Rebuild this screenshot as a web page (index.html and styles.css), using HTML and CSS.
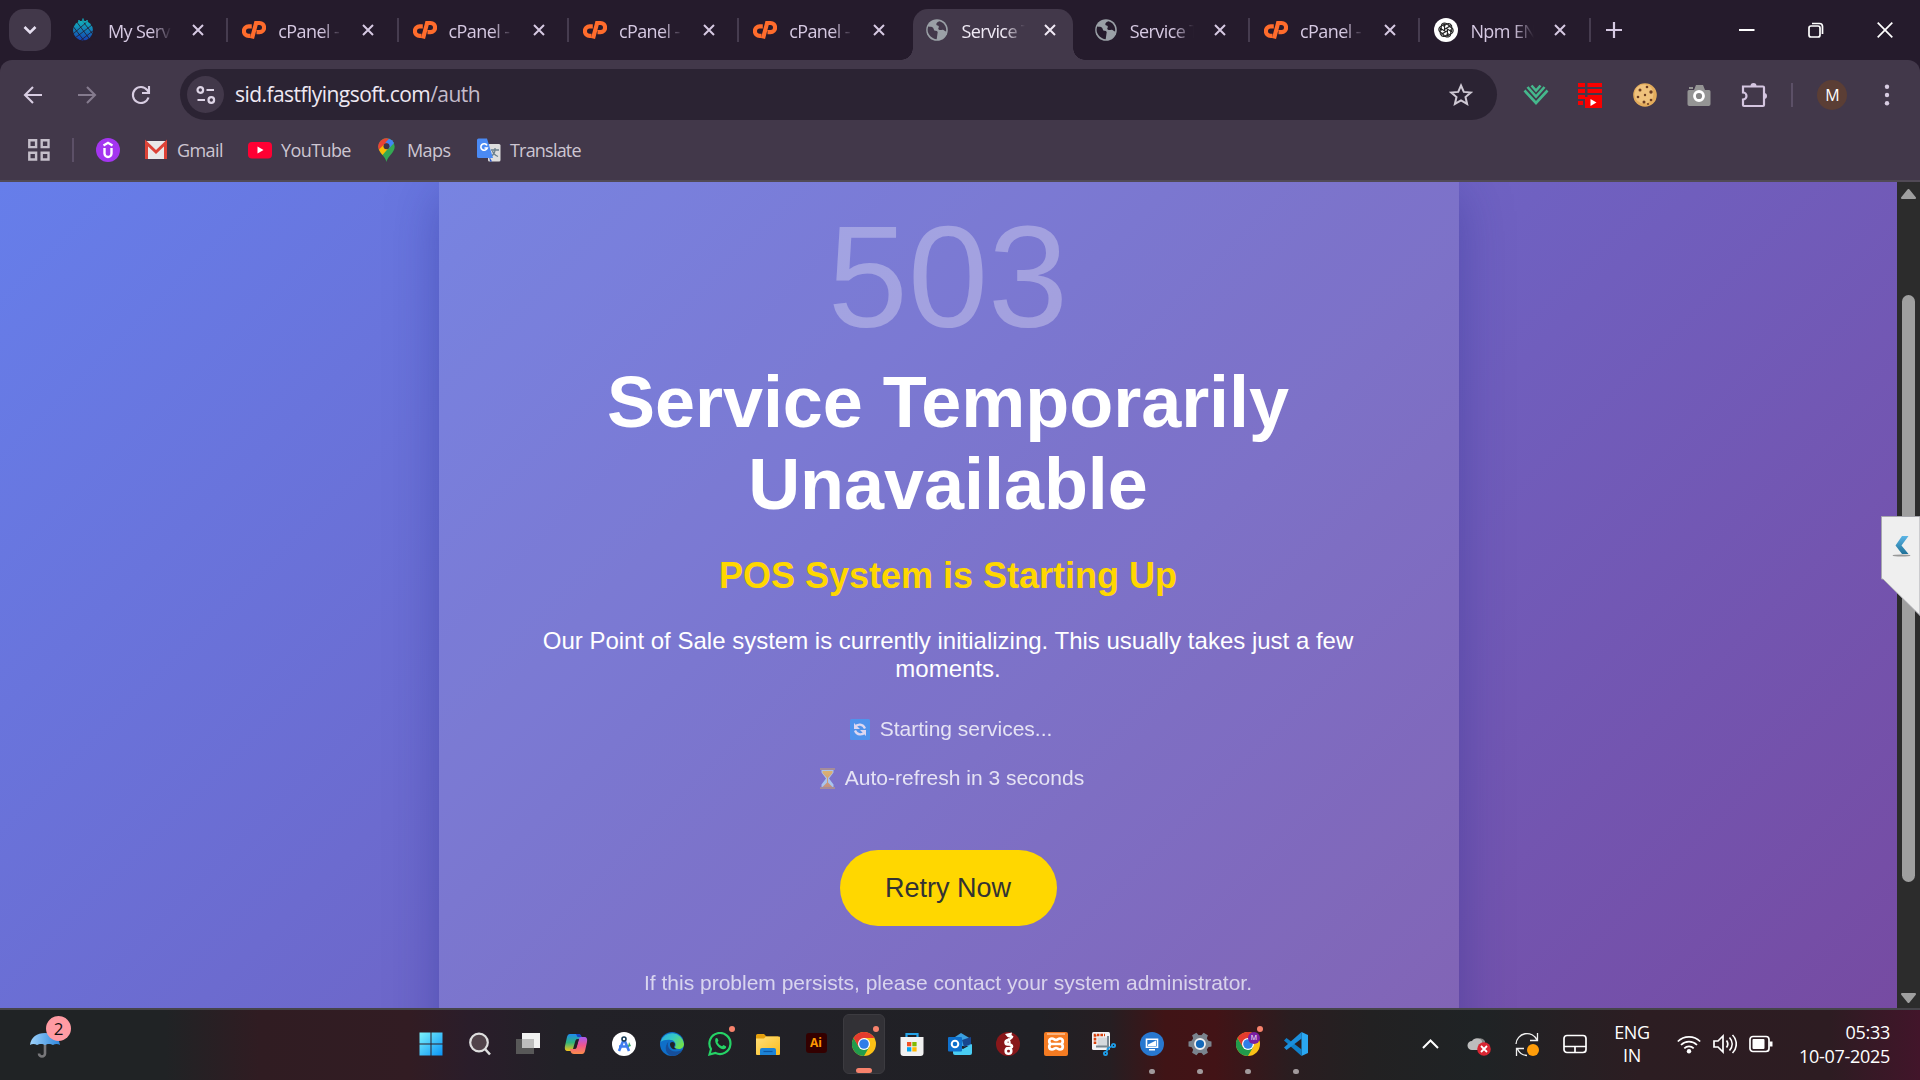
FILE: index.html
```html
<!DOCTYPE html>
<html lang="en">
<head>
<meta charset="utf-8">
<title>Service Temporarily Unavailable</title>
<link rel="stylesheet" href="styles.css">
</head>
<body>
<svg class="defs" aria-hidden="true">
  <defs>
    <linearGradient id="g-win" x1="0" y1="0" x2="1" y2="1"><stop offset="0" stop-color="#7df3fb"/><stop offset="1" stop-color="#0a93f5"/></linearGradient>
    <linearGradient id="g-edge" x1="0" y1="0" x2="1" y2=".6"><stop offset="0" stop-color="#2aa7e8"/><stop offset=".5" stop-color="#34c8c6"/><stop offset="1" stop-color="#6fe04f"/></linearGradient>
    <linearGradient id="g-folder" x1="0" y1="0" x2="1" y2="1"><stop offset="0" stop-color="#ffe07a"/><stop offset="1" stop-color="#fbbc1c"/></linearGradient>
    <linearGradient id="g-cop1" x1="0" y1="0" x2="0" y2="1"><stop offset="0" stop-color="#1e8cf0"/><stop offset=".5" stop-color="#2fb57c"/><stop offset="1" stop-color="#f3c41c"/></linearGradient>
    <linearGradient id="g-cop2" x1="0" y1="0" x2="0" y2="1"><stop offset="0" stop-color="#a65bf0"/><stop offset=".5" stop-color="#f0568e"/><stop offset="1" stop-color="#fb8d4a"/></linearGradient>
    <linearGradient id="g-orb" x1="0" y1="0" x2="0" y2="1"><stop offset="0" stop-color="#12b5bb"/><stop offset="1" stop-color="#1440b4"/></linearGradient>
    <linearGradient id="g-umb" x1="0" y1="0" x2="1" y2="0"><stop offset="0" stop-color="#9fd3fb"/><stop offset="1" stop-color="#2c86dc"/></linearGradient>
    <linearGradient id="g-chev" x1="0" y1="0" x2="0" y2="1"><stop offset="0" stop-color="#5bb5e6"/><stop offset="1" stop-color="#1f7198"/></linearGradient>
    <linearGradient id="g-sand" x1="0" y1="0" x2="0" y2="1"><stop offset="0" stop-color="#f3c25c"/><stop offset="1" stop-color="#d79a6c"/></linearGradient>
    <symbol id="cpanel" viewBox="0 0 24 24"><g fill="none" stroke="#ff6c2c" stroke-width="4.2"><path d="M9.800 8.300H6.700a4.600 4.600 0 0 0 0 9.600H8.500"/><path d="M10 20.500 14.100 5h3.400a4.400 4.400 0 0 1 0 9.200H14.500"/></g></symbol>
    <symbol id="globe" viewBox="0 0 24 24"><circle cx="12" cy="12" r="10.800" fill="#9aa0a6"/><path class="globe-gap" d="M3.200 8.500C5.400 9 6.800 8.200 8 9.700s.5 2.800 2.700 3.100c2 .3 2.300 1.200 1.800 2.700l-.8 5.700C7 20.900 2.600 16.500 2.600 12c0-1.200.2-2.400.6-3.500zM14.600 3.200c-2 .8-3.500 1.600-3.300 3.200.2 1.300 2.300.8 2.500 2 .3 1.400-1.500 2 .2 3.300 1.600 1.100 2.800-.5 4.500.3 1.300.6 1.500 1.500 2.600 1.500.8-4.600-2-9-6.500-10.300z"/></symbol>
    <symbol id="close" viewBox="0 0 12 12"><path d="M1 1l10 10M11 1 1 11" stroke="currentColor" stroke-width="2" fill="none"/></symbol>
    <symbol id="chrome" viewBox="0 0 24 24"><circle cx="12" cy="12" r="12" fill="#fbc116"/><path d="M1.600 6A12 12 0 0 0 12 24l5.200-9L12 12 7 15z" fill="#219b4c"/><path d="M1.600 6A12 12 0 0 1 22.400 6H12l-5.200 9z" fill="#e33b2e"/><circle cx="12" cy="12" r="6" fill="#fff"/><circle cx="12" cy="12" r="4.800" fill="#2f7de8"/></symbol>
  </defs>
</svg>

<div class="tabstrip">
  <div class="tab-search"><svg width="14" height="10" viewBox="0 0 14 10"><path d="M1.500 2 7 7.500 12.500 2" fill="none" stroke="#e6dff0" stroke-width="2.600"/></svg></div>
  <div class="tabs">
    <div class="tab"><svg class="fav" viewBox="0 0 24 24"><circle cx="11" cy="12.500" r="10" fill="url(#g-orb)"/><g stroke="#251b2c" stroke-width=".8" fill="none"><path d="M4 3l15 20M0 7l13 17M9 1l14 18M1 16 16 3M3 20 20 7M8 23l14-11"/></g><path d="M11 .5v5M15 2v3M7 2v3" stroke="#12a5b8" stroke-width="1.500"/></svg><span class="label">My Serv</span><svg class="x"><use href="#close"/></svg></div>
    <div class="tab"><svg class="fav"><use href="#cpanel"/></svg><span class="label">cPanel -</span><svg class="x"><use href="#close"/></svg></div>
    <div class="tab"><svg class="fav"><use href="#cpanel"/></svg><span class="label">cPanel -</span><svg class="x"><use href="#close"/></svg></div>
    <div class="tab"><svg class="fav"><use href="#cpanel"/></svg><span class="label">cPanel -</span><svg class="x"><use href="#close"/></svg></div>
    <div class="tab nosep"><svg class="fav"><use href="#cpanel"/></svg><span class="label">cPanel -</span><svg class="x"><use href="#close"/></svg></div>
    <div class="tab active nosep"><svg class="fav"><use href="#globe"/></svg><span class="label">Service T</span><svg class="x"><use href="#close"/></svg></div>
    <div class="tab"><svg class="fav"><use href="#globe"/></svg><span class="label">Service T</span><svg class="x"><use href="#close"/></svg></div>
    <div class="tab"><svg class="fav"><use href="#cpanel"/></svg><span class="label">cPanel -</span><svg class="x"><use href="#close"/></svg></div>
    <div class="tab"><svg class="fav" viewBox="0 0 24 24"><circle cx="12" cy="12" r="12" fill="#fff"/><g fill="none" stroke="#222" stroke-width="1.100"><path id="petal" d="M9 8.200l3.800-2.200c2.600-1.400 5.400.8 5 3.600v4.200L12 10.300"/><use href="#petal" transform="rotate(60 12 12)"/><use href="#petal" transform="rotate(120 12 12)"/><use href="#petal" transform="rotate(180 12 12)"/><use href="#petal" transform="rotate(240 12 12)"/><use href="#petal" transform="rotate(300 12 12)"/></g></svg><span class="label">Npm EN</span><svg class="x"><use href="#close"/></svg></div>
  </div>
  <svg class="plus" width="16" height="16" viewBox="0 0 16 16"><path d="M8 0v16M0 8h16" stroke="#d6c9e2" stroke-width="2.200"/></svg>
  <div class="winbtns">
    <svg width="16" height="16" viewBox="0 0 16 16"><path d="M0 8h15.500" stroke="#fff" stroke-width="2"/></svg>
    <svg width="16" height="16" viewBox="0 0 16 16"><g fill="none" stroke="#fff" stroke-width="1.700"><rect x="1" y="4" width="11" height="11" rx="2"/><path d="M4 1.500h7.500a3 3 0 0 1 3 3V12"/></g></svg>
    <svg width="16" height="16" viewBox="0 0 16 16"><path d="M.7.7l14.600 14.600M15.300.7.7 15.300" stroke="#fff" stroke-width="1.700"/></svg>
  </div>
</div>

<div class="chrome-bar">
  <div class="toolbar">
    <div class="nav">
      <svg viewBox="0 0 20 20"><path d="M19 10H2.500M10 2 2 10l8 8" fill="none" stroke="#d8cde2" stroke-width="2.100"/></svg>
      <svg viewBox="0 0 20 20"><path d="M1 10h16.500M10 2l8 8-8 8" fill="none" stroke="#857b8e" stroke-width="2.100"/></svg>
      <svg viewBox="0 0 20 20"><path d="M17.500 12.500A8 8 0 1 1 16.200 5l1.500 2" fill="none" stroke="#d8cde2" stroke-width="2.100"/><path d="M18 1v7h-7" fill="none" stroke="#d8cde2" stroke-width="2.100"/></svg>
    </div>
    <div class="omnibox">
      <div class="site"><svg width="20" height="18" viewBox="0 0 20 18"><g fill="none" stroke="#ded5e6" stroke-width="2.200"><circle cx="4.300" cy="4" r="2.800"/><path d="M10.500 4H18M1.500 14H9"/><circle cx="15.300" cy="14" r="2.800"/></g></svg></div>
      <span class="url">sid.fastflyingsoft.com<i>/auth</i></span>
      <svg class="star" width="24" height="24" viewBox="0 0 24 24"><path d="M12 2.500l2.800 6.400 7 .6-5.300 4.600 1.600 6.800L12 17.300l-6.100 3.600 1.600-6.800L2.200 9.500l7-.6z" fill="none" stroke="#cfc9d4" stroke-width="2"/></svg>
    </div>
    <div class="ext">
      <svg viewBox="0 0 26 26"><g fill="none" stroke="#45b88c" stroke-width="2.600"><path d="M1.500 8.500 13 21 24.500 8.500"/><path d="M4.500 5 13 14.500 21.500 5"/><path d="M8.500 3.500 13 8.500l4.500-5"/></g></svg>
      <svg viewBox="0 0 26 26"><g fill="#f80000"><path d="M1 1h7v4H1zM10.500 1H25v4H10.500zM1 7h7v4H1zM10.500 7H25v4H10.500zM1 13h7v4H1zM10.500 13H25v2H10.500zM1 19h5v4H1zM8 15h17v11H8z"/></g><path d="M13.500 17v7l6-3.500z" fill="#fff"/></svg>
      <svg viewBox="0 0 26 26"><circle cx="13" cy="13" r="11.800" fill="#e3ac5c"/><circle cx="12" cy="12" r="9.500" fill="#efc27c"/><g fill="#6b3c22"><circle cx="8" cy="8" r="1.500"/><circle cx="15" cy="5" r="1.300"/><circle cx="19" cy="10" r="1.700"/><circle cx="6" cy="15" r="1.300"/><circle cx="13" cy="13" r="1.200"/><circle cx="12" cy="20" r="1.500"/><circle cx="19" cy="18" r="1.300"/><circle cx="16" cy="22" r="1"/></g></svg>
      <svg viewBox="0 0 26 26"><path d="M3 8h5l2-5h7l2 5h4a1.500 1.500 0 0 1 1.500 1.500V22A1.800 1.800 0 0 1 23 24H3a1.800 1.800 0 0 1-1.500-2V9.500A1.500 1.500 0 0 1 3 8zM3 5h4v2H3z" fill="#949494"/><circle cx="13" cy="14" r="4.500" fill="#858585" stroke="#fff" stroke-width="2.800"/></svg>
      <svg viewBox="0 0 26 26"><path d="M2 4.500h20a1 1 0 0 1 1 1V23a1 1 0 0 1-1 1H3a1 1 0 0 1-1-1v-5.500a3.500 3.500 0 0 0 0-7z" fill="none" stroke="#d4c5e0" stroke-width="2.200"/><path d="M9.500 4a3 3 0 0 1 6 0zM23 11a3 3 0 0 1 0 6z" fill="#d4c5e0"/></svg>
      <b class="vsep"></b>
      <span class="avatar">M</span>
      <svg class="dots" viewBox="0 0 6 26"><g fill="#d8cde2"><circle cx="3" cy="4.800" r="2.200"/><circle cx="3" cy="13" r="2.200"/><circle cx="3" cy="21.200" r="2.200"/></g></svg>
    </div>
  </div>
  <div class="bookmarks">
    <svg width="22" height="22" viewBox="0 0 22 22"><g fill="none" stroke="#c5bfca" stroke-width="2.400"><path d="M1.300 1.300h6.800v6.800H1.300zM13.700 1.300h6.800v6.800h-6.800zM1.300 13.700h6.800v6.800H1.300zM13.700 13.700h6.800v6.800h-6.800z"/></g></svg>
    <b class="vsep"></b>
    <svg width="24" height="24" viewBox="0 0 24 24"><circle cx="12" cy="12" r="12" fill="#a435f0"/><path d="M8.500 10v5.500a3.500 3.500 0 0 0 7 0V10M7.500 7.500l4.500-2.700 4.500 2.700" fill="none" stroke="#fff" stroke-width="2.400"/></svg>
    <div class="bm gmail"><svg width="24" height="24" viewBox="0 0 24 24"><rect x="1" y="3" width="22" height="18" rx="1.500" fill="#e9e9e9"/><path d="M2.500 21V5L12 14l9.500-9v16" fill="none" stroke="#dd4337" stroke-width="3"/></svg><span>Gmail</span></div>
    <div class="bm yt"><svg width="24" height="24" viewBox="0 0 24 24"><rect y="4" width="24" height="16.500" rx="4" fill="#ff0033"/><path d="M9.500 8.500v7l6-3.500z" fill="#fff"/></svg><span>YouTube</span></div>
    <div class="bm maps"><svg width="17" height="24" viewBox="0 0 17 24"><path d="M8.500 24C7.500 18 .3 15 .3 8.500a8.200 8.200 0 0 1 16.400 0C16.700 15 9.500 18 8.500 24z" fill="#34a853"/><path d="M2 4a8.200 8.200 0 0 1 9.500-3L6 7z" fill="#ea4335"/><path d="M11 .8A8.200 8.200 0 0 1 16 5l-5 5.500L6 6z" fill="#4285f4"/><path d="M2 3.500A8.200 8.200 0 0 0 2 13.500L10 5.500 6 4z" fill="#ea4335"/><path d="M1 11.500c.8 2.300 2.200 4 3.500 5.500l7-8-6-2z" fill="#fbbc04"/><circle cx="8.500" cy="8.300" r="3" fill="#3e3448"/></svg><span>Maps</span></div>
    <div class="bm tr"><svg width="24" height="24" viewBox="0 0 24 24"><rect x="11" y="6" width="12.500" height="17.500" rx="1.500" fill="#dedede"/><path d="M12 18l3 5.500h-2z" fill="#2a56c6"/><path d="M14 12h8M18 10v2c0 3-2 5-4 6.500M15.500 13c1 3 3 4.500 5.500 5.500" stroke="#6a7f8c" fill="none" stroke-width="1.300"/><path d="M1.500.5H10L16 20H1.500A1.500 1.500 0 0 1 0 18.500V2A1.500 1.500 0 0 1 1.500.5z" fill="#4a8af4"/><path d="M10 7.300A3.300 3.300 0 1 0 10.300 10H7.500" fill="none" stroke="#fff" stroke-width="1.600"/></svg><span>Translate</span></div>
  </div>
</div>

<div class="viewport">
  <main class="page">
    <section class="card">
      <div class="code">503</div>
      <h1>Service Temporarily Unavailable</h1>
      <h2>POS System is Starting Up</h2>
      <p class="lead">Our Point of Sale system is currently initializing. This usually takes just a few moments.</p>
      <p class="status"><svg width="20" height="21" viewBox="0 0 20 21"><rect width="20" height="21" rx="1.500" fill="#459bf5"/><g fill="none" stroke="#f4f0fa" stroke-width="2.200"><path d="M5 8c2.500-3.500 8-3.500 10 1.500M15 13c-2.500 3.500-8 3.500-10-1.500"/></g><path d="M4 4v6h6zM16 17v-6h-6z" fill="#f4f0fa"/></svg><span>Starting services...</span></p>
      <p class="status second"><svg width="15" height="21" viewBox="0 0 15 21"><path d="M1.500 1h12v3.500L9 10.500l4.500 6V20h-12v-3.500L6 10.500 1.500 4.500z" fill="#b5d9f8"/><path d="M2.500 3h10v2L8 10v4.500l4.500 4.500h-10l4.500-4.500V10L2.500 5z" fill="url(#g-sand)"/><path d="M0 0h15v2H0zM0 19h15v2H0z" fill="#b0938f"/></svg><span>Auto-refresh in 3 seconds</span></p>
      <div class="retry">Retry Now</div>
      <p class="foot">If this problem persists, please contact your system administrator.</p>
    </section>
  </main>
  <div class="scroll">
    <svg width="15" height="10" viewBox="0 0 15 10"><path d="M7.500 1 14 9H1z" fill="#9f9f9f" stroke="#9f9f9f" stroke-width="2" stroke-linejoin="round"/></svg>
    <div class="thumb"></div>
    <svg width="15" height="10" viewBox="0 0 15 10"><path d="M7.500 9 14 1H1z" fill="#9f9f9f" stroke="#9f9f9f" stroke-width="2" stroke-linejoin="round"/></svg>
  </div>
  <svg class="sidetab" width="39" height="100" viewBox="0 0 39 100"><path d="M.5.5H39V99.500L2 63H.5z" fill="#efefef" stroke="#a8a8ae"/><path d="M21 20h6.500l-7 9.500 7 8.500H21l-6.500-8.500z" fill="url(#g-chev)"/><ellipse cx="20.500" cy="39.500" rx="9" ry="1" fill="#999"/></svg>
</div>

<footer class="taskbar">
  <div class="weather"><svg width="30" height="30" viewBox="0 0 30 30"><path d="M15 5v18.500a3 3 0 0 1-6 0" fill="none" stroke="#77777a" stroke-width="2.600"/><path d="M0 15C1 7 7 3 15 3s14 4 15 12c-2-1.500-5-1.500-7 0-2-1.500-6-1.500-8 0-2-1.500-6-1.500-8 0-2-1.500-5-1.500-7 0z" fill="url(#g-umb)"/></svg><em>2</em></div>
  <div class="apps">
    <div class="app"><svg viewBox="0 0 24 24"><path d="M.5.500h11v11H.5zM12.500.500h11v11h-11zM.5 12.500h11v11H.5zM12.500 12.500h11v11h-11z" fill="url(#g-win)"/></svg></div>
    <div class="app"><svg viewBox="0 0 24 24"><circle cx="11" cy="10.500" r="8.800" fill="#51434a" stroke="#dedede" stroke-width="2.200"/><path d="M17 17l5 5.500" stroke="#dedede" stroke-width="2.600"/></svg></div>
    <div class="app"><svg viewBox="0 0 24 24"><path d="M0 7h18v15H0z" fill="#585858"/><path d="M6 1h18v15H6z" fill="#f2f2f2"/><path d="M6 7h12v9H6z" fill="#bdbdbd"/></svg></div>
    <div class="app"><svg viewBox="0 0 24 24"><path d="M6 2h8c2 0 3 1 3.500 3l.5 2h-4c-2 0-2.500 1-3 3l-2 7c-.4 1.500-1.500 2-3 2H4c-3 0-3.500-2-3-5l2-9c.5-2 1.500-3 3-3z" fill="url(#g-cop1)"/><path d="M18 22h-8c-2 0-3-1-3.500-3L6 17h4c2 0 2.500-1 3-3l2-7c.4-1.500 1.500-2 3-2h2c3 0 3.500 2 3 5l-2 9c-.5 2-1.500 3-3 3z" fill="url(#g-cop2)"/><path d="M14 2c2 0 3 1 3.500 3h-4l-1.500-3z" fill="#1743c4"/><path d="M12.500 7.500h2.200l-2.600 9H9.900z" fill="#241d28"/></svg></div>
    <div class="app"><svg viewBox="0 0 24 24"><circle cx="12" cy="12" r="12" fill="#fff"/><path d="M12 7 7 19M12 7l5 12M7 14.500h10" stroke="#3e7df0" stroke-width="2.600" fill="none"/><path d="M17 10l2 4-3 1z" fill="#35a862"/><circle cx="12" cy="7" r="2" fill="#fff" stroke="#153a55" stroke-width="1.600"/></svg></div>
    <div class="app"><svg viewBox="0 0 24 24"><circle cx="12" cy="12" r="12" fill="#0f6fc8"/><path d="M.5 10A12 12 0 0 1 24 12c0 3-2.500 5-5 5-3 0-4.500-1-4-2 1.500-2 .5-6.500-4-7-4-.5-8 0-10.500 2z" fill="url(#g-edge)"/><path d="M9 9c-3 4 0 10.500 7 10.500 3 0 5-1 6.500-2A12 12 0 0 1 12 24C6 23 3 15 9 9z" fill="#164f9b"/><path d="M10 12c0-2 3-3 4.500-1 .8 1.200.3 2.800-.3 3.500-.5 1 .6 2 2.500 2.500C13 18 10 16 10 12z" fill="#202126"/></svg></div>
    <div class="app"><svg viewBox="0 0 24 24"><path d="M1.500 22.500 3 17A10.500 10.500 0 1 1 7.500 21z" fill="none" stroke="#25d366" stroke-width="2.200"/><path d="M7.500 6.500c1-1 2-.5 2.300.6l.7 1.700-1 1.500c1 2 2.500 3.200 4.500 4l1.500-1.300 2.300 1.200c.8.6.3 2-.8 2.600-4 2-11.500-5-9.500-10.300z" fill="#25d366"/></svg><u></u></div>
    <div class="app"><svg viewBox="0 0 24 24"><path d="M0 3.500A1.500 1.500 0 0 1 1.500 2H8l2.500 2.500H22V10H0z" fill="#e5a00d"/><path d="M0 6.500 8 6.500 10 4.500h13a1 1 0 0 1 1 1V22a1 1 0 0 1-1 1H1a1 1 0 0 1-1-1z" fill="url(#g-folder)"/><path d="M4 23v-5a2 2 0 0 1 2-2h12a2 2 0 0 1 2 2v5z" fill="#1c83d6"/><path d="M7.500 19.500h9" stroke="#0b57a4" stroke-width="1.200"/></svg></div>
    <div class="app"><span class="ai">Ai</span></div>
    <div class="app on"><svg><use href="#chrome"/></svg><u></u></div>
    <div class="app"><svg viewBox="0 0 24 24"><path d="M6.500 6V2h11v4" fill="none" stroke="#25a4e8" stroke-width="2.200"/><path d="M.5 5h23v16a3 3 0 0 1-3 3h-17a3 3 0 0 1-3-3z" fill="#f1f1f1"/><path d="M7 10h4.300v4.300H7z" fill="#f25022"/><path d="M12.300 10h4.300v4.300h-4.300z" fill="#7fba00"/><path d="M7 15.200h4.300v4.300H7z" fill="#00a4ef"/><path d="M12.300 15.200h4.300v4.300h-4.300z" fill="#ffb900"/></svg></div>
    <div class="app"><svg viewBox="0 0 24 24"><path d="M4 7l9-6 10 6v7H4z" fill="#3ba0e0"/><path d="M14 8l9-3v7l-7 3z" fill="#17468f"/><path d="M5 12l10 5 9-5v9a2 2 0 0 1-2 2H7a2 2 0 0 1-2-2z" fill="#49cdf3"/><rect y="5" width="14" height="14.500" rx="1" fill="#0f70cc"/><circle cx="7" cy="12" r="3.300" fill="none" stroke="#fff" stroke-width="2"/></svg></div>
    <div class="app"><svg viewBox="0 0 24 24"><circle cx="12" cy="12" r="12" fill="#88171a"/><g fill="none" stroke="#fff" stroke-width="2.600"><path d="M14.500 5.500c1.500 1.500-4 1.500-4.500 4.500s6 1.500 6 4.500c0 2-4 1.500-6 2"/><circle cx="12.500" cy="19" r="2.800"/><circle cx="11.500" cy="10.500" r="2.200" stroke-width="2"/></g><path d="M9 2l7-1.500L15.500 3l2 1.500-1 2-5-1.500z" fill="#fff"/></svg></div>
    <div class="app"><svg viewBox="0 0 24 24"><rect width="24" height="24" rx="2" fill="#f47b22"/><path d="M3 1h18v2H3z" fill="#f9b27c"/><path d="M8 6.500h0c2 0 2.500 1.500 4 1.500s2-1.500 4-1.500c3.500 0 3.500 4.500 1 5.500 2.500 1 2.500 5.500-1 5.500-2 0-2.500-1.500-4-1.500s-2 1.500-4 1.500c-3.500 0-3.500-4.500-1-5.500-2.500-1-2.500-5.500 1-5.500zM8 12h8" fill="none" stroke="#fff" stroke-width="2.700" stroke-linejoin="round"/></svg></div>
    <div class="app"><svg viewBox="0 0 24 24"><rect width="18" height="18" rx="1.500" fill="#f1f3f5"/><path d="M3 12V3h10" fill="none" stroke="#d8400c" stroke-width="2.600" stroke-dasharray="2.600 1"/><path d="M5.500 5.500H15V15H5.500z" fill="#d5d9dd"/><path d="M16 4v14M4 14.500h13" stroke="#7b8791" stroke-width="2"/><g fill="none" stroke="#1e9be4" stroke-width="1.900"><path d="M15 17l5-3M14 20l2-3"/><circle cx="21.500" cy="13.500" r="1.600"/><circle cx="13.500" cy="21.500" r="1.600"/></g></svg></div>
    <div class="app"><svg viewBox="0 0 24 24"><circle cx="12" cy="12" r="12" fill="#2878d0"/><path d="M6.500 7.200h11v8h-11z" fill="#2878d0" stroke="#fff" stroke-width="1.600"/><path d="M8 14V12.500L16 8.500V14zM9 17h6v1.500H9z" fill="#fff"/></svg><s></s></div>
    <div class="app"><svg viewBox="0 0 24 24"><g fill="#7a848e"><path d="M9.500.5h5l1 5h-7zM9.500 23.500h5l1-5h-7z" transform="rotate(30 12 12)"/><path d="M9.500.5h5l1 5h-7zM9.500 23.500h5l1-5h-7z" transform="rotate(90 12 12)"/><path d="M9.500.5h5l1 5h-7zM9.500 23.500h5l1-5h-7z" transform="rotate(150 12 12)"/><circle cx="12" cy="12" r="9"/></g><circle cx="12" cy="12" r="5" fill="#1368b8" stroke="#f1f1f1" stroke-width="1.800"/></svg><s></s></div>
    <div class="app"><svg><use href="#chrome"/></svg><q>M</q><u></u><s></s></div>
    <div class="app"><svg viewBox="0 0 24 24"><path d="M17.500 0 24 3v18l-6.500 3z" fill="#2aa8f2"/><path d="M17.500 24 0 8.500 2.500 6l15.200 11.500z" fill="#0f7fc8"/><path d="M17.500 0 0 15.500 2.500 18 17.700 6.500z" fill="#1b8fdc"/></svg><s></s></div>
  </div>
  <div class="tray">
    <svg class="i1" width="17" height="24" viewBox="0 0 17 24"><path d="M1 16l7.500-7.500L16 16" fill="none" stroke="#fff" stroke-width="2"/></svg>
    <svg class="i2" width="24" height="24" viewBox="0 0 24 24"><path d="M7 12a6 6 0 0 1 11-3v6z" fill="#868686"/><path d="M5 18a4.500 4.500 0 0 1 0-9 6 6 0 0 1 10 0v9z" fill="#bdbdbd"/><circle cx="17" cy="17" r="6.800" fill="#d92632"/><path d="M14 14l6 6M20 14l-6 6" stroke="#fff" stroke-width="1.800"/></svg>
    <svg class="i3" width="24" height="26" viewBox="0 0 24 26"><g fill="none" stroke="#f1f1f1" stroke-width="1.300"><path d="M1 13A11 11 0 0 1 22 9M22.500 2v7.500H15M12 24.500a11 11 0 0 1-9.500-6.500M1.500 25v-7.500H9"/></g><circle cx="18" cy="19" r="6" fill="#ff9d0a"/></svg>
    <svg class="i4" width="24" height="20" viewBox="0 0 24 20"><g fill="none" stroke="#fff" stroke-width="1.700"><rect x="1" y="1.500" width="22" height="17" rx="3"/><path d="M1 12.500h22M12 12.500v6"/></g></svg>
    <div class="lang">ENG<br>IN</div>
    <svg class="i5" width="24" height="20" viewBox="0 0 24 20"><g fill="none" stroke="#fff" stroke-width="1.700"><path d="M.8 7.500a15.800 15.800 0 0 1 22.400 0M4 11a11.300 11.300 0 0 1 16 0M7.300 14.300a6.600 6.600 0 0 1 9.400 0"/></g><circle cx="12" cy="17.300" r="2.200" fill="#fff"/></svg>
    <svg class="i6" width="24" height="22" viewBox="0 0 24 22"><g fill="none" stroke="#fff" stroke-width="1.700"><path d="M1 8h4l5-5v16l-5-5H1zM13.500 7.500c1.500 2 1.500 5 0 7M16.500 4.500c3.500 4 3.500 9 0 13M19.500 2c5 5 5 13 0 18"/></g></svg>
    <svg class="i7" width="24" height="18" viewBox="0 0 24 18"><rect x="1" y="1.500" width="19" height="15" rx="3" fill="none" stroke="#fff" stroke-width="1.700"/><rect x="3.500" y="4" width="12" height="10" rx="1" fill="#fff"/><path d="M22 6.500v5" stroke="#fff" stroke-width="3"/></svg>
    <div class="clock">05:33<br>10-07-2025</div>
  </div>
</footer>
</body>
</html>
```
FILE: styles.css
```css
* { box-sizing: border-box; }
body {
  margin: 0;
  width: 1920px;
  height: 1080px;
  overflow: hidden;
  display: flex;
  flex-direction: column;
  background: #251b2c;
  font-family: "Open Sans", "Noto Sans", sans-serif;
  font-size: 18px;
}
svg { display: block; flex: none; }
p, h1, h2 { margin: 0; }
.defs { position: absolute; width: 0; height: 0; }

/* tab strip */
.tabstrip { height: 60px; flex: none; display: flex; align-items: center; padding-left: 9px; color: #d6c9e2; }
.tab-search { width: 42px; height: 42px; border-radius: 15px; background: #42384a; display: grid; place-items: center; margin-right: 5px; }
.tabs { display: flex; height: 60px; }
.tab { --gap: #251b2c; position: relative; width: 170.3px; display: flex; align-items: center; padding-left: 16px; }
.tab::after { content: ""; position: absolute; right: -2px; top: 18px; width: 2px; height: 24px; background: #463c4f; }
.tab.nosep::after { display: none; }
.fav { width: 24px; height: 24px; z-index: 1; }
.globe-gap { fill: var(--gap); }
.label {
  width: 66px;
  margin: 1px 18px 0 12px;
  z-index: 1;
  overflow: hidden;
  white-space: nowrap;
  letter-spacing: -0.6px;
  -webkit-mask-image: linear-gradient(90deg, #000 66%, transparent 97%);
  mask-image: linear-gradient(90deg, #000 66%, transparent 97%);
}
.x { width: 12px; height: 12px; z-index: 1; }
.active { --gap: #42384a; color: #f0eaf5; padding-left: 18px; }
.active .label { margin-right: 17px; }
.active::before {
  content: "";
  position: absolute;
  left: 6px;
  top: 9px;
  width: 160px;
  height: 51px;
  border-radius: 15px 15px 0 0;
  background: #42384a;
}
.active::after {
  display: block !important;
  left: -6px;
  top: 48px;
  width: 184px;
  height: 12px;
  background:
    radial-gradient(circle at 0 0, transparent 11.5px, #42384a 12px) left / 12px 12px no-repeat,
    radial-gradient(circle at 100% 0, transparent 11.5px, #42384a 12px) right / 12px 12px no-repeat;
}
.plus { margin-left: 17px; }
.winbtns { display: flex; gap: 53px; margin-left: auto; padding-right: 27px; }

/* toolbar */
.chrome-bar { height: 122px; flex: none; background: #42384a; border-radius: 12px 12px 0 0; border-bottom: 2px solid #514a56; }
.toolbar { display: flex; align-items: center; height: 69px; }
.nav { display: flex; gap: 34px; padding-left: 23px; width: 180px; }
.nav svg { width: 20px; height: 20px; }
.omnibox { width: 1317px; height: 51px; border-radius: 26px; background: #2b2333; display: flex; align-items: center; padding: 0 24px 0 7px; }
.site { width: 37px; height: 37px; border-radius: 50%; background: #42384a; display: grid; place-items: center; }
.url { flex: 1; margin: -1px 0 0 11px; font-size: 21px; letter-spacing: -0.55px; color: #eee8f2; white-space: nowrap; }
.url i { font-style: normal; color: #c4bccb; }
.ext { flex: 1; display: flex; align-items: center; padding-left: 26px; gap: 28.4px; }
.ext svg { width: 26px; height: 26px; }
.vsep { width: 2px; height: 24px; background: #5c5067; }
.ext .vsep { margin-left: -4px; }
.avatar { width: 30px; height: 30px; border-radius: 50%; background: #5b3e35; color: #fff; display: grid; place-items: center; font-size: 16px; margin-left: -4px; }
.ext .dots { width: 6px; margin-left: 8px; }

/* bookmarks */
.bookmarks { display: flex; align-items: center; height: 42px; padding-left: 28px; color: #cdc6d2; }
.bookmarks .vsep { margin: 0 22px; }
.bm { display: flex; align-items: center; gap: 9px; letter-spacing: -0.6px; }
.bm span { margin-top: -1px; }
.gmail { margin-left: 24px; width: 104px; }
.yt { width: 130px; }
.maps { gap: 12px; width: 99px; }
.tr { letter-spacing: -0.8px; }

/* web page */
.viewport { position: relative; flex: 1; min-height: 0; display: flex; }
.page {
  flex: 1;
  overflow: hidden;
  padding: 0 438px 0 439px;
  background: linear-gradient(135deg, #667eea 0%, #764ba2 100%);
  font-family: "Liberation Sans", Arial, sans-serif;
  color: #fff;
}
.card {
  height: 940px;
  padding: 24px 91px 0 89px;
  text-align: center;
  background: rgba(255, 255, 255, 0.1);
  box-shadow: 0 12px 48px rgba(31, 38, 135, 0.37);
}
.code { font-size: 144px; line-height: 144px; opacity: 0.3; }
h1 { font-size: 72px; line-height: 82px; margin-top: 11px; letter-spacing: -0.05px; }
h2 { font-size: 36px; line-height: 42px; margin-top: 30px; color: #ffd700; }
.lead { font-size: 24px; line-height: 28px; margin-top: 30px; }
.status { display: flex; justify-content: center; align-items: center; gap: 10px; font-size: 21px; line-height: 24px; margin-top: 34px; padding-left: 6px; opacity: 0.8; }
.second { margin-top: 25px; padding-left: 8px; }
.retry { width: 217px; height: 76px; line-height: 76px; margin: 60px auto 0; border-radius: 38px; background: #ffd700; color: #333; font-size: 27px; }
.foot { font-size: 21px; line-height: 24px; margin-top: 45px; opacity: 0.7; }
.scroll { width: 23px; background: #2c2c2c; display: flex; flex-direction: column; align-items: center; padding: 7px 0 5px; }
.thumb { width: 13px; height: 587px; margin: 96px 0 auto; border-radius: 7px; background: #9f9f9f; }
.sidetab { position: absolute; right: 0; top: 334px; }

/* taskbar */
.taskbar {
  height: 72px;
  flex: none;
  display: flex;
  align-items: center;
  padding-bottom: 2px;
  border-top: 2px solid #46444a;
  color: #fff;
  background: linear-gradient(90deg, #202325 0, #202325 165px, #301c22 260px, #321c23 410px, #2a1d2a 470px, #222127 560px, #202025 1040px, #261e22 1110px, #401416 1165px, #421316 1215px, #2a1d20 1290px, #222122 1370px, #1f2325 1480px, #2c1d22 1640px, #2d1c22 1830px, #42152a 1920px);
}
.weather { position: relative; width: 408px; padding: 0 0 0 30px; }
.weather em { position: absolute; left: 46px; top: -12px; width: 25px; height: 25px; border-radius: 50%; background: #ff9ba3; color: #111; font-style: normal; font-size: 17px; line-height: 25px; text-align: center; }
.weather svg { margin-top: 2px; }
.apps { display: flex; }
.app { position: relative; width: 48px; height: 60px; display: grid; place-items: center; }
.app:first-child svg { margin-left: -2px; }
.app svg { width: 24px; height: 24px; }
.app.on::before { content: ""; position: absolute; inset: 0 3px; border-radius: 6px; background: #323136; border: 1px solid #3c3b40; }
.app.on::after { content: ""; position: absolute; left: 16px; bottom: 1px; width: 16px; height: 5px; border-radius: 3px; background: #f7826c; }
.app.on svg { z-index: 1; }
.ai { width: 21px; height: 20px; border-radius: 3px; background: #330000; color: #ff9a00; font: bold 12px/20px "Open Sans", sans-serif; text-align: center; margin-top: -3px; }
.app u { position: absolute; left: 33px; top: 12px; width: 6px; height: 6px; border-radius: 50%; background: #f7826c; z-index: 2; }
.app s { position: absolute; left: 21px; bottom: 0; width: 6px; height: 5px; border-radius: 3px; background: #a19a9c; }
.app q { position: absolute; left: 24px; top: 18px; width: 12px; height: 12px; border-radius: 50%; background: #7b1fa2; font-size: 7px; line-height: 12px; text-align: center; quotes: none; }
.tray { display: flex; align-items: center; margin-left: auto; padding-right: 29px; }
.i2 { margin-left: 28px; }
.i3, .i4 { margin-left: 24px; }
.lang { width: 90px; text-align: center; line-height: 23px; letter-spacing: -0.3px; margin-top: -1px; }
.i6, .i7 { margin-left: 12px; }
.clock { width: 118px; text-align: right; line-height: 24px; letter-spacing: -0.3px; margin-top: -1px; padding-right: 1px; }
```
